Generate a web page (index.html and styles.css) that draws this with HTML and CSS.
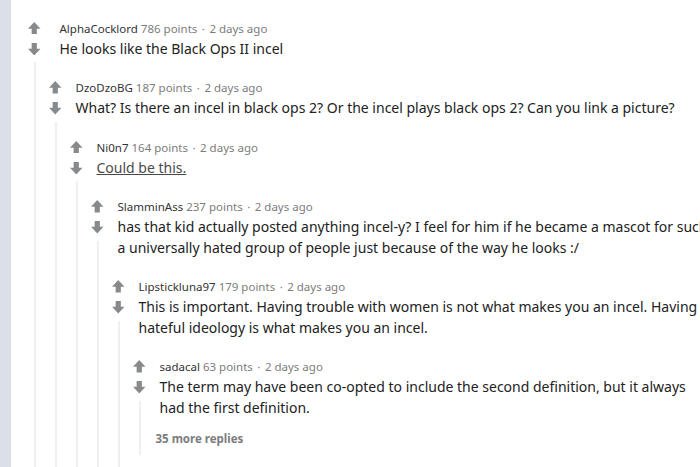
FILE: index.html
```html
<!DOCTYPE html>
<html>
<head>
<meta charset="utf-8">
<link rel="stylesheet" href="styles.css">
</head>
<body>
<div class="page">
  <div class="panel">
    <div class="comment top">
      <div class="vote">
        <span class="arrow"><svg viewBox="0 0 12 12"><path d="M6 0L12 6.5H8.5V12H3.5V6.5H0Z"/></svg></span>
        <span class="arrow"><svg viewBox="0 0 12 12"><path d="M6 12L12 5.5H8.5V0H3.5V5.5H0Z"/></svg></span>
        <span class="thread"></span>
      </div>
      <div class="main">
        <div class="meta"><span class="author">AlphaCocklord</span> 786 points <span class="dot">·</span> 2 days ago</div>
        <p class="text">He looks like the Black Ops II incel</p>

        <div class="comment">
          <div class="vote">
            <span class="arrow"><svg viewBox="0 0 12 12"><path d="M6 0L12 6.5H8.5V12H3.5V6.5H0Z"/></svg></span>
            <span class="arrow"><svg viewBox="0 0 12 12"><path d="M6 12L12 5.5H8.5V0H3.5V5.5H0Z"/></svg></span>
            <span class="thread"></span>
          </div>
          <div class="main">
            <div class="meta"><span class="author">DzoDzoBG</span> 187 points <span class="dot">·</span> 2 days ago</div>
            <p class="text">What? Is there an incel in black ops 2? Or the incel plays black ops 2? Can you link a picture?</p>

            <div class="comment">
              <div class="vote">
                <span class="arrow"><svg viewBox="0 0 12 12"><path d="M6 0L12 6.5H8.5V12H3.5V6.5H0Z"/></svg></span>
                <span class="arrow"><svg viewBox="0 0 12 12"><path d="M6 12L12 5.5H8.5V0H3.5V5.5H0Z"/></svg></span>
                <span class="thread"></span>
              </div>
              <div class="main">
                <div class="meta"><span class="author">Ni0n7</span> 164 points <span class="dot">·</span> 2 days ago</div>
                <p class="text"><a class="link" href="#">Could be this.</a></p>

                <div class="comment">
                  <div class="vote">
                    <span class="arrow"><svg viewBox="0 0 12 12"><path d="M6 0L12 6.5H8.5V12H3.5V6.5H0Z"/></svg></span>
                    <span class="arrow"><svg viewBox="0 0 12 12"><path d="M6 12L12 5.5H8.5V0H3.5V5.5H0Z"/></svg></span>
                    <span class="thread"></span>
                  </div>
                  <div class="main">
                    <div class="meta"><span class="author">SlamminAss</span> 237 points <span class="dot">·</span> 2 days ago</div>
                    <p class="text">has that kid actually posted anything incel-y? I feel for him if he became a mascot for such a universally hated group of people just because of the way he looks :/</p>

                    <div class="comment">
                      <div class="vote">
                        <span class="arrow"><svg viewBox="0 0 12 12"><path d="M6 0L12 6.5H8.5V12H3.5V6.5H0Z"/></svg></span>
                        <span class="arrow"><svg viewBox="0 0 12 12"><path d="M6 12L12 5.5H8.5V0H3.5V5.5H0Z"/></svg></span>
                        <span class="thread"></span>
                      </div>
                      <div class="main tail">
                        <div class="meta"><span class="author">Lipstickluna97</span> 179 points <span class="dot">·</span> 2 days ago</div>
                        <p class="text">This is important. Having trouble with women is not what makes you an incel. Having a hateful ideology is what makes you an incel.</p>

                        <div class="comment">
                          <div class="vote">
                            <span class="arrow"><svg viewBox="0 0 12 12"><path d="M6 0L12 6.5H8.5V12H3.5V6.5H0Z"/></svg></span>
                            <span class="arrow"><svg viewBox="0 0 12 12"><path d="M6 12L12 5.5H8.5V0H3.5V5.5H0Z"/></svg></span>
                            <span class="thread"></span>
                          </div>
                          <div class="main">
                            <div class="meta"><span class="author">sadacal</span> 63 points <span class="dot">·</span> 2 days ago</div>
                            <p class="text">The term may have been co-opted to include the second definition, but it always had the first definition.</p>
                            <div class="more">35 more replies</div>
                          </div>
                        </div>

                      </div>
                    </div>

                  </div>
                </div>

              </div>
            </div>

          </div>
        </div>

      </div>
    </div>
  </div>
</div>
</body>
</html>
```

FILE: styles.css
```css
html, body {
  margin: 0;
  padding: 0;
}
body {
  font-family: "Noto Sans", "Open Sans", sans-serif;
  overflow: hidden;
}
.page {
  display: flex;
  height: 467px;
  overflow: hidden;
  background: #dae0e6;
}
.panel {
  flex: 0 0 auto;
  margin-left: 11px;
  width: 689px;
  padding-left: 13px;
  background: #ffffff;
}
.comment {
  display: flex;
  padding-top: 18px;
}
.comment.top {
  padding-top: 17.5px;
}
.vote {
  flex: 0 0 21px;
  display: flex;
  flex-direction: column;
  align-items: center;
}
.arrow {
  height: 21px;
  display: flex;
  align-items: center;
  justify-content: center;
}
.arrow svg {
  width: 12.5px;
  height: 12.5px;
  fill: #878a8c;
  display: block;
}
.thread {
  flex: 1;
  width: 2px;
  margin-top: 2.5px;
  background: #edeff1;
}
.main {
  flex: 1;
  min-width: 0;
}
.main.tail {
  padding-bottom: 40px;
}
.meta {
  height: 21px;
  line-height: 21px;
  font-size: 11.5px;
  color: #7c7c7c;
  padding-left: 9.5px;
  white-space: nowrap;
}
.author {
  color: #333333;
}
.dot {
  margin: 0 1.5px;
}
.text {
  margin: 0;
  font-size: 14px;
  line-height: 20.5px;
  color: #222222;
  padding-left: 9.5px;
}
.top > .main > .meta,
.top > .main > .text {
  padding-left: 14.5px;
}
.link {
  color: #4a4a4a;
  text-decoration: underline;
}
.more {
  margin-top: 10.75px;
  padding-left: 5.5px;
  padding-bottom: 6px;
  font-size: 11.5px;
  line-height: 20px;
  font-weight: 700;
  color: #7c7c7c;
}
```
